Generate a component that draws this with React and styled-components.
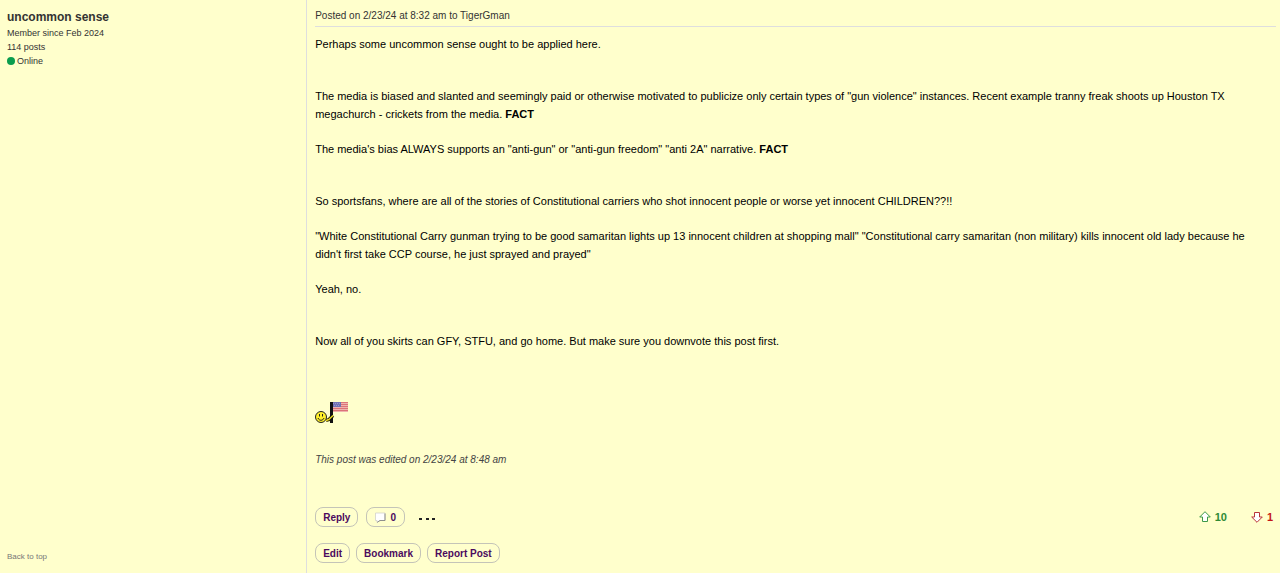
import React from "react";
import styled, { createGlobalStyle } from "styled-components";

const Global = createGlobalStyle`
  * { box-sizing: border-box; }
  body {
    margin: 0;
    background: #ffffcc;
    color: #000;
    font-family: "Liberation Sans", Arial, sans-serif;
  }
`;

const Post = styled.article`
  display: grid;
  grid-template-columns: 24% 1fr;
  min-height: 100vh;
`;

const Author = styled.aside`
  display: flex;
  flex-direction: column;
  align-items: flex-start;
  padding: 9px 7px;
  border-right: 1px solid #dedede;
  font-size: 9px;
  line-height: 14px;
  color: #333;
`;

const AuthorName = styled.h2`
  margin: 0 0 1px;
  font-size: 12px;
  line-height: 16px;
`;

const Status = styled.div`
  display: flex;
  align-items: center;
  gap: 2px;
`;

const Dot = styled.span`
  width: 8px;
  height: 8px;
  border-radius: 50%;
  background: #0a9d4e;
`;

const TopLink = styled.a`
  margin-top: auto;
  font-size: 8px;
  line-height: 14px;
  color: #777;
  text-decoration: none;
`;

const Content = styled.section`
  display: flex;
  flex-direction: column;
  padding: 9px 4px 9px 8px;
`;

const PostedOn = styled.header`
  padding-bottom: 3px;
  border-bottom: 1px solid #dedede;
  font-size: 10px;
  line-height: 14px;
  color: #333;
`;

const Message = styled.div`
  padding: 8px 8px 0 0;
  font-size: 11px;
  line-height: 18px;
`;

const Paragraph = styled.p`
  margin: 0 0 ${(p) => (p.$wide ? 34 : 17)}px;
`;

const Emote = styled.svg`
  display: block;
  margin-top: 52px;
`;

const Edited = styled.p`
  margin: 29px 0 40px;
  font-size: 10px;
  line-height: 14px;
  font-style: italic;
  color: #444;
`;

const Actions = styled.div`
  display: flex;
  align-items: center;
  gap: ${(p) => p.$gap}px;
  & + & { margin-top: 16px; }
`;

const Button = styled.button`
  display: flex;
  align-items: center;
  gap: 4px;
  height: 20px;
  padding: 0 ${(p) => (p.$icon ? 8 : 7)}px;
  border: 1px solid #c4c4b8;
  border-radius: 8px;
  background: transparent;
  color: #4b0a5e;
  font: bold 10px "Liberation Sans", Arial, sans-serif;
`;

const More = styled.button`
  display: flex;
  padding: 4px 6px;
  border: 0;
  background: transparent;
`;

const Votes = styled.div`
  display: flex;
  gap: 21px;
  margin-left: auto;
`;

const Vote = styled.button`
  display: flex;
  align-items: center;
  gap: 4px;
  padding: 0 3px 0 0;
  border: 0;
  background: transparent;
  color: ${(p) => p.$color};
  font: bold 11px "Liberation Sans", Arial, sans-serif;
`;

const FlagSmiley = () => (
  <Emote width="34" height="22" viewBox="0 0 34 22" role="img" aria-label="Smiley waving a flag">
    <rect x="17" y="0" width="16" height="10" fill="#efb3ae" />
    <path d="M17 .5h16M17 2.5h16M17 4.5h16M17 6.5h16M17 8.5h16" stroke="#dc7378" />
    <rect x="17" y="0" width="9" height="5" fill="#7072b5" />
    <path d="M18 1.5h7M19 3.5h6" stroke="#9897c8" strokeDasharray="1 1" />
    <path d="M11 18.5l3-1 4-4" fill="none" stroke="#3a3200" strokeWidth="3.4" />
    <path d="M16.5 0v21" stroke="#111" strokeWidth="3" />
    <path d="M11 18.5l3-1 4-4" fill="none" stroke="#f0df20" strokeWidth="1.4" />
    <circle cx="6" cy="15" r="5.5" fill="#fff02a" stroke="#222" />
    <path d="M4.5 12v2.5M7.5 12v2.5M3 16c1 3 5 3 6 0" fill="none" stroke="#222" />
  </Emote>
);

const Bubble = () => (
  <svg width="11" height="11" viewBox="0 0 11 11" aria-hidden="true">
    <path d="M.5 1h9.5v7.5H5L2 10.5V8.5H.5z" fill="#fff" stroke="#d2d2ca" strokeWidth=".8" />
    <path d="M10 1.5v7H5L2.2 10.3" fill="none" stroke="#8e8e8c" />
  </svg>
);

const Arrow = ({ color, down }) => (
  <svg width="12" height="12" viewBox="0 0 12 12" aria-hidden="true">
    <path
      d={down ? "M6 11.3L.7 6H3.5V1.5H8.5V6H11.3Z" : "M6 .7L.7 6H3.5V10.5H8.5V6H11.3Z"}
      fill="#fff"
      stroke={color}
      strokeLinejoin="round"
    />
  </svg>
);

export default function App() {
  return (
    <>
      <Global />
      <Post id="top">
        <Author>
          <AuthorName>uncommon sense</AuthorName>
          <div>Member since Feb 2024</div>
          <div>114 posts</div>
          <Status><Dot />Online</Status>
          <TopLink href="#top">Back to top</TopLink>
        </Author>
        <Content>
          <PostedOn>Posted on 2/23/24 at 8:32 am to TigerGman</PostedOn>
          <Message>
            <Paragraph $wide>Perhaps some uncommon sense ought to be applied here.</Paragraph>
            <Paragraph>
              The media is biased and slanted and seemingly paid or otherwise motivated to publicize only certain types of "gun violence" instances. Recent example tranny freak shoots up Houston TX megachurch - crickets from the media. <b>FACT</b>
            </Paragraph>
            <Paragraph $wide>
              The media's bias ALWAYS supports an "anti-gun" or "anti-gun freedom" "anti 2A" narrative. <b>FACT</b>
            </Paragraph>
            <Paragraph>
              So sportsfans, where are all of the stories of Constitutional carriers who shot innocent people or worse yet innocent CHILDREN??!!
            </Paragraph>
            <Paragraph>
              "White Constitutional Carry gunman trying to be good samaritan lights up 13 innocent children at shopping mall" "Constitutional carry samaritan (non military) kills innocent old lady because he didn't first take CCP course, he just sprayed and prayed"
            </Paragraph>
            <Paragraph $wide>Yeah, no.</Paragraph>
            <div>
              Now all of you skirts can GFY, STFU, and go home. But make sure you downvote this post first.
            </div>
            <FlagSmiley />
          </Message>
          <Edited>This post was edited on 2/23/24 at 8:48 am</Edited>
          <Actions $gap={8}>
            <Button>Reply</Button>
            <Button $icon aria-label="0 comments"><Bubble />0</Button>
            <More aria-label="More options">
              <svg width="18" height="12" viewBox="0 0 18 12" aria-hidden="true">
                <path d="M0 7h3v2H0zM7 7h3v2H7zM13 7h3v2h-3z" fill="#222" />
              </svg>
            </More>
            <Votes>
              <Vote $color="#2f8a35" aria-label="Upvote, 10"><Arrow color="#3d9948" />10</Vote>
              <Vote $color="#c51616" aria-label="Downvote, 1"><Arrow color="#b8343a" down />1</Vote>
            </Votes>
          </Actions>
          <Actions $gap={6}>
            <Button>Edit</Button>
            <Button>Bookmark</Button>
            <Button>Report Post</Button>
          </Actions>
        </Content>
      </Post>
    </>
  );
}
